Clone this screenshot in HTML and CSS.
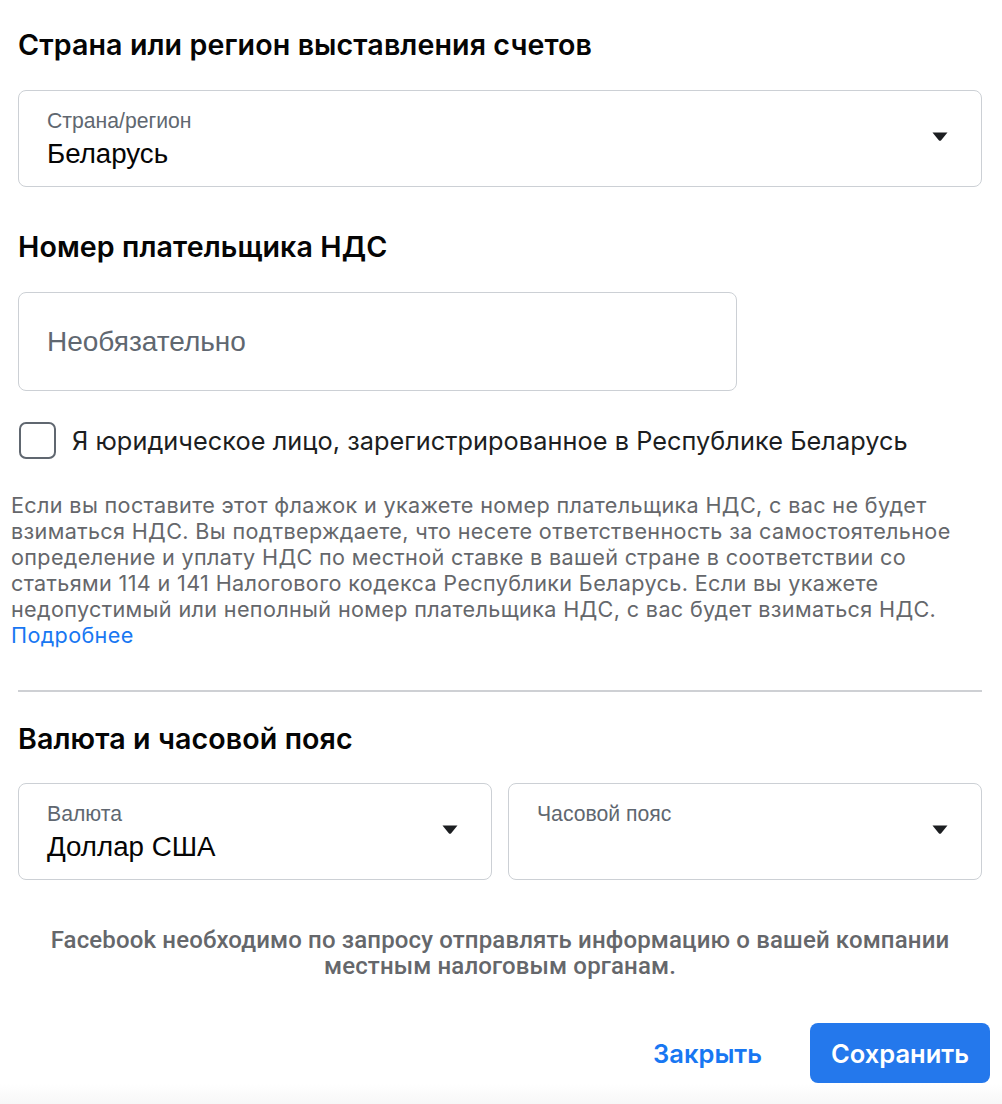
FILE: index.html
```html
<!DOCTYPE html>
<html lang="ru">
<head>
<meta charset="utf-8">
<link rel="stylesheet" href="styles.css">
</head>
<body>
<div class="page">
  <h2 class="heading heading-first">Страна или регион выставления счетов</h2>
  <div class="select select-full">
    <div class="select-text">
      <div class="select-label">Страна/регион</div>
      <div class="select-value">Беларусь</div>
    </div>
    <svg class="caret" width="16" height="10" viewBox="0 0 16 10"><path d="M0.5 0.5 H15.5 L9.2 8.2 Q8 9.5 6.8 8.2 Z" fill="#1c1e21"/></svg>
  </div>

  <h2 class="heading heading-vat">Номер плательщика НДС</h2>
  <div class="input">Необязательно</div>

  <label class="check-row">
    <span class="checkbox"></span>
    <span class="check-label">Я юридическое лицо, зарегистрированное в Республике Беларусь</span>
  </label>

  <p class="help">Если вы поставите этот флажок и укажете номер плательщика НДС, с вас не будет<br>взиматься НДС. Вы подтверждаете, что несете ответственность за самостоятельное<br>определение и уплату НДС по местной ставке в вашей стране в соответствии со<br>статьями 114 и 141 Налогового кодекса Республики Беларусь. Если вы укажете<br>недопустимый или неполный номер плательщика НДС, с вас будет взиматься НДС.<br><a class="link" href="#">Подробнее</a></p>

  <hr class="divider">

  <h2 class="heading heading-cur">Валюта и часовой пояс</h2>
  <div class="select-grid">
    <div class="select">
      <div class="select-text">
        <div class="select-label">Валюта</div>
        <div class="select-value">Доллар США</div>
      </div>
      <svg class="caret" width="16" height="10" viewBox="0 0 16 10"><path d="M0.5 0.5 H15.5 L9.2 8.2 Q8 9.5 6.8 8.2 Z" fill="#1c1e21"/></svg>
    </div>
    <div class="select">
      <div class="select-text">
        <div class="select-label">Часовой пояс</div>
        <div class="select-value">&nbsp;</div>
      </div>
      <svg class="caret" width="16" height="10" viewBox="0 0 16 10"><path d="M0.5 0.5 H15.5 L9.2 8.2 Q8 9.5 6.8 8.2 Z" fill="#1c1e21"/></svg>
    </div>
  </div>

  <p class="notice">Facebook необходимо по запросу отправлять информацию о вашей компании<br>местным налоговым органам.</p>

  <div class="actions">
    <button class="btn btn-text">Закрыть</button>
    <button class="btn btn-primary">Сохранить</button>
  </div>
</div>
<div class="bottom-strip"></div>
</body>
</html>
```

FILE: styles.css
```css
* { box-sizing: border-box; }

html, body {
  margin: 0;
  padding: 0;
  background: #ffffff;
}

body {
  font-family: "Inter", "Liberation Sans", sans-serif;
  color: #1c1e21;
  width: 1002px;
  height: 1104px;
  overflow: hidden;
  position: relative;
}

.page {
  padding: 0 20px 0 18px;
}

.heading {
  margin: 0;
  font-family: "Inter", sans-serif;
  font-weight: 600;
  font-size: 28.6px;
  line-height: 36px;
  color: #050505;
  white-space: nowrap;
  letter-spacing: 0.1px;
}

.heading-first { padding-top: 27px; }
.heading-vat { margin-top: 42px; }
.heading-cur { margin-top: 29px; }

.select {
  display: flex;
  align-items: center;
  justify-content: space-between;
  height: 97px;
  border: 1.5px solid #ccd0d5;
  border-radius: 8px;
  padding: 0 33px 0 28px;
  background: #fff;
}

.select-full { margin-top: 27px; }

.select-text { padding-top: 1px; }

.select-label {
  font-family: "Liberation Sans", Arial, sans-serif;
  font-size: 21.2px;
  line-height: 24px;
  color: #606770;
  white-space: nowrap;
}

.select-value {
  font-family: "Liberation Sans", Arial, sans-serif;
  font-size: 27.7px;
  line-height: 32px;
  color: #050505;
  margin-top: 5px;
  white-space: nowrap;
}

.caret { flex: none; display: block; margin-top: -4px; }

.input {
  margin-top: 27px;
  width: 719px;
  height: 99px;
  border: 1.5px solid #ccd0d5;
  border-radius: 8px;
  padding: 0 28px;
  display: flex;
  align-items: center;
  font-family: "Liberation Sans", Arial, sans-serif;
  font-size: 28px;
  color: #606770;
}

.check-row {
  display: flex;
  align-items: center;
  gap: 16px;
  margin-top: 31px;
  padding-left: 1px;
}

.checkbox {
  width: 37px;
  height: 37px;
  border: 2.5px solid #606770;
  border-radius: 7px;
  flex: none;
}

.check-label {
  font-family: "Inter", sans-serif;
  font-size: 25.3px;
  line-height: 30px;
  color: #1c1e21;
  white-space: nowrap;
  letter-spacing: 0.05px;
}

.help {
  margin: 33px 0 0 -7px;
  font-family: "Inter", sans-serif;
  font-size: 21.6px;
  line-height: 26px;
  color: #65676b;
  white-space: nowrap;
  letter-spacing: 0.35px;
}

.link {
  color: #1877f2;
  text-decoration: none;
}

.divider {
  margin: 42px 0 0 0;
  border: none;
  border-top: 2px solid #ced0d4;
  height: 0;
}

.select-grid {
  display: grid;
  grid-template-columns: 1fr 1fr;
  gap: 16px;
  margin-top: 26px;
}

.notice {
  margin: 47px 0 0 0;
  text-align: center;
  font-family: "Roboto", sans-serif;
  font-weight: 500;
  font-size: 24px;
  line-height: 26px;
  color: #65676b;
  white-space: nowrap;
  letter-spacing: 0.15px;
}

.actions {
  display: flex;
  justify-content: flex-end;
  align-items: center;
  gap: 26px;
  margin-top: 44px;
  margin-right: -8px;
}

.btn {
  font-family: "Inter", sans-serif;
  font-weight: 600;
  font-size: 25.5px;
  border: none;
  border-radius: 8px;
  height: 60px;
  cursor: pointer;
}

.btn-text {
  background: transparent;
  color: #1877f2;
  padding: 0 22px;
}

.btn-primary {
  background: #2478ec;
  color: #ffffff;
  width: 180px;
  padding: 0;
}

.bottom-strip {
  position: absolute;
  left: 0;
  right: 0;
  bottom: 0;
  height: 20px;
  background: linear-gradient(#ffffff, #f7f7f7);
}
```
